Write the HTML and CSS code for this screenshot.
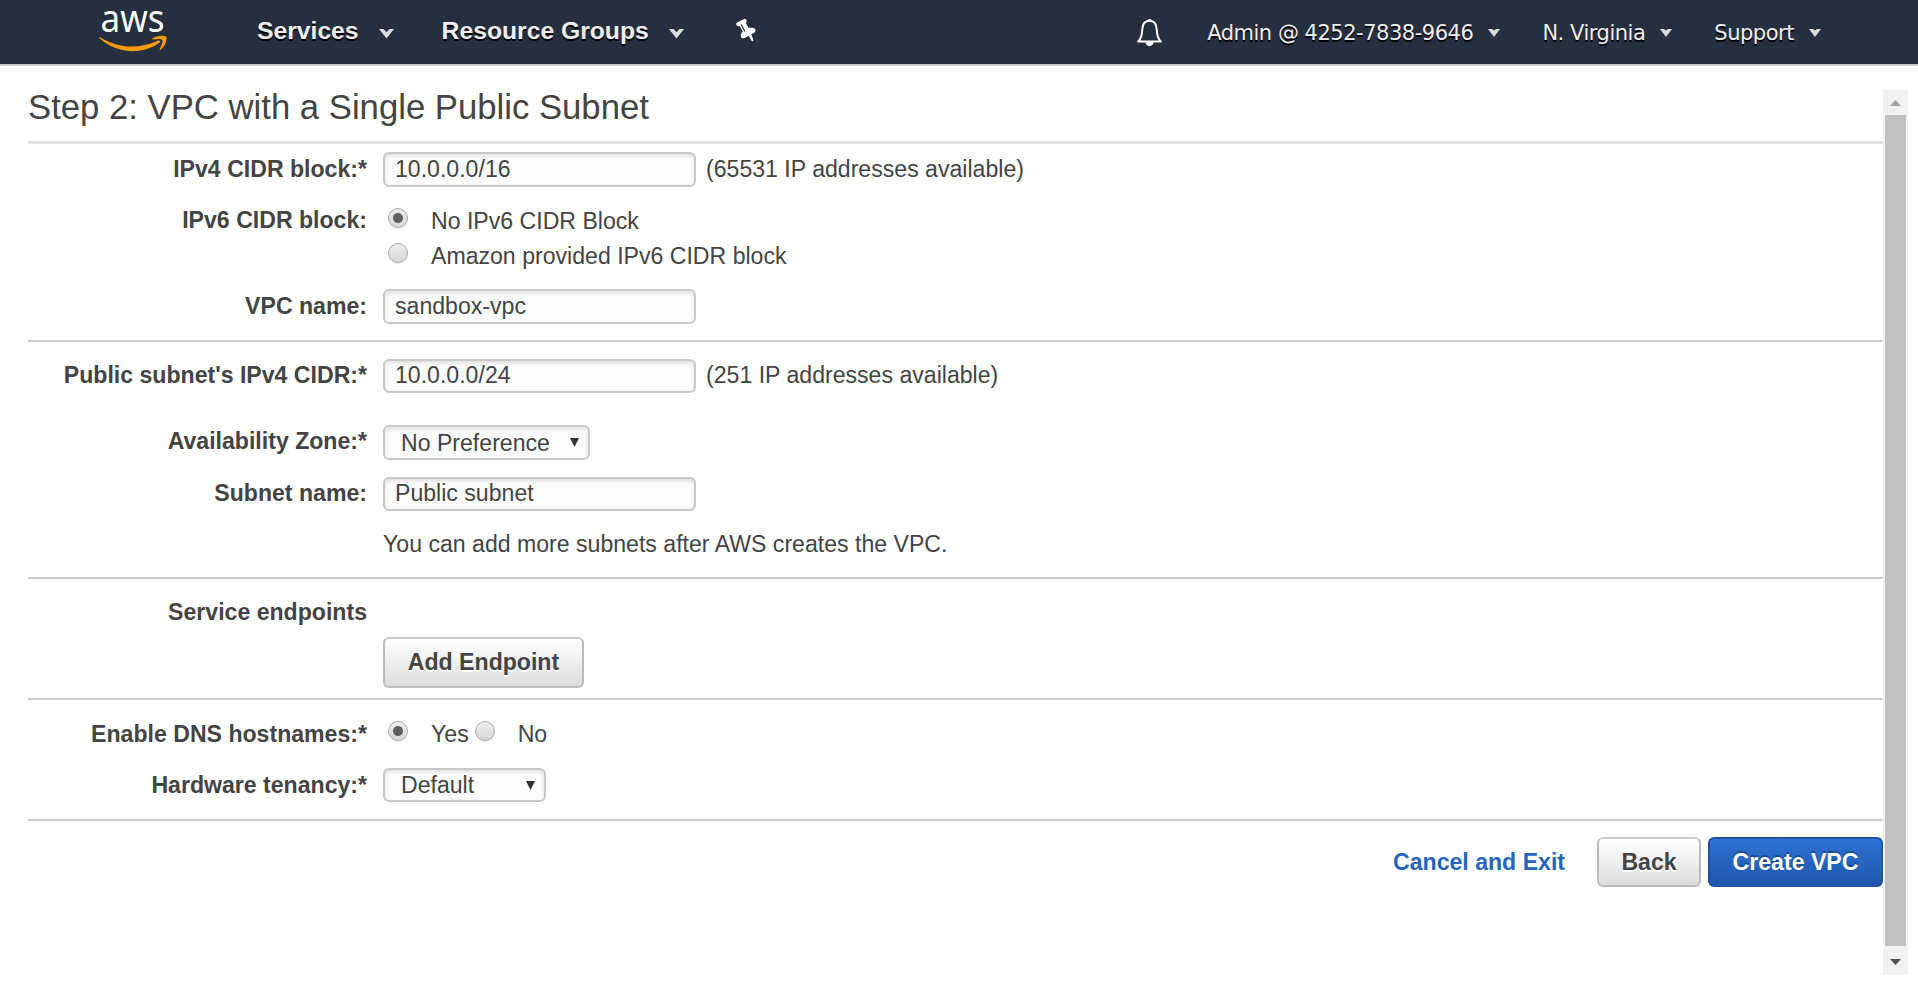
FILE: index.html
```html
<!DOCTYPE html>
<html lang="en">
<head>
<meta charset="utf-8">
<title>Create VPC</title>
<link rel="stylesheet" href="styles.css">
</head>
<body>
<header class="topbar">
  <svg class="logo" width="72" height="48" viewBox="0 0 72 48">
    <text class="logo-word" x="2.5" y="26" textLength="64" lengthAdjust="spacingAndGlyphs">aws</text>
    <path d="M1.5 31C20 42 40 44 60 34.6C62 33.8 63 35.6 61.4 36.8C44 49.500 18 47.500 1.200 32Z" fill="#f79b00"/>
    <path d="M54.500 32.600C59 29 66.500 29.400 68.400 31.100C69 34.600 67 40.500 62.700 43.700C61.800 44.200 61.400 43.700 61.800 42.800C63.400 39.300 65 35.500 64.300 33.900C62.500 32.400 58.500 33.200 55.200 33.600C54.200 33.700 53.800 33.100 54.500 32.600Z" fill="#f79b00"/>
  </svg>
  <nav class="main-nav">
    <a class="menu">Services<svg class="chevron" width="15" height="11" viewBox="0 0 15 11"><path d="M0 1H4.500L7.500 4.200L10.500 1H15L7.500 10.500Z"/></svg></a>
    <a class="menu">Resource Groups<svg class="chevron" width="15" height="11" viewBox="0 0 15 11"><path d="M0 1H4.500L7.500 4.200L10.500 1H15L7.500 10.500Z"/></svg></a>
    <svg class="pin" width="22" height="24" viewBox="0 0 22 24">
      <path d="M.3 5.800C-.2 4.200 1.200 3.300 2 3.100L7.700.3C8.600-.2 10-.1 10.500 1C11.100 2.200 10.400 3.200 9.700 3.700L12.600 9C14.800 8.500 18 8.300 19.200 10.300C20 11.900 19 13.400 17.700 14L15.200 15.300L17.400 21L16.900 22.500L15.500 21.800L12.700 16.700L8.700 18.900C7 19.700 5.200 19.300 4.800 17.500C4.400 15.600 5.600 13.800 6.800 12.600L3.700 6.900C2.300 7.500.8 7.200.3 5.800Z" fill="#fff"/>
      <path d="M5.500 6L8.600 12" stroke="#252f3f" stroke-width="1.200" stroke-linecap="round"/>
    </svg>
  </nav>
  <nav class="account-nav">
    <svg class="bell" width="28" height="30" viewBox="0 0 28 30">
      <path d="M11.300 3.200C11.300-.1 15.700-.1 15.700 3.200Z" fill="#fff"/>
      <path d="M2.200 23.500C4.500 21.300 6 18.500 6.200 12C6.400 6 9 2.800 13.500 2.800S20.600 6 20.800 12C21 18.500 22.500 21.300 24.800 23.500Z" fill="none" stroke="#fff" stroke-width="2" stroke-linejoin="round"/>
      <path d="M9.500 24H17.500C17.500 29.500 9.500 29.500 9.500 24Z" fill="#fff"/>
    </svg>
    <a class="account">Admin @ 4252-7838-9646<svg class="caret" width="12" height="8" viewBox="0 0 12 8"><path d="M0 0H4L6 1.500L8 0H12L6 8Z"/></svg></a>
    <a class="account">N. Virginia<svg class="caret" width="12" height="8" viewBox="0 0 12 8"><path d="M0 0H4L6 1.500L8 0H12L6 8Z"/></svg></a>
    <a class="account">Support<svg class="caret" width="12" height="8" viewBox="0 0 12 8"><path d="M0 0H4L6 1.500L8 0H12L6 8Z"/></svg></a>
  </nav>
</header>
<div class="page">
  <main class="wizard">
    <h1 class="title">Step 2: VPC with a Single Public Subnet</h1>
    <section class="section vpc">
      <div class="row"><span class="label">IPv4 CIDR block:*</span><div class="field"><span class="input">10.0.0.0/16</span><span class="hint">(65531 IP addresses available)</span></div></div>
      <div class="row"><span class="label">IPv6 CIDR block:</span>
        <div class="choices">
          <span class="choice"><i class="radio on"></i>No IPv6 CIDR Block</span>
          <span class="choice"><i class="radio"></i>Amazon provided IPv6 CIDR block</span>
        </div></div>
      <div class="row name-row"><span class="label">VPC name:</span><div class="field"><span class="input">sandbox-vpc</span></div></div>
    </section>
    <section class="section subnet">
      <div class="row zone-gap"><span class="label">Public subnet's IPv4 CIDR:*</span><div class="field"><span class="input short">10.0.0.0/24</span><span class="hint">(251 IP addresses available)</span></div></div>
      <div class="row"><span class="label">Availability Zone:*</span><div class="field"><span class="select zone">No Preference<svg class="arrow" width="9" height="9" viewBox="0 0 10 10"><path d="M0 0H10L5 10Z"/></svg></span></div></div>
      <div class="row"><span class="label">Subnet name:</span><div class="field"><span class="input short">Public subnet</span></div></div>
      <p class="note">You can add more subnets after AWS creates the VPC.</p>
    </section>
    <section class="section endpoints">
      <div class="row"><span class="label">Service endpoints</span></div>
      <a class="button add">Add Endpoint</a>
    </section>
    <section class="section options">
      <div class="row"><span class="label">Enable DNS hostnames:*</span>
        <div class="field"><span class="choice yes"><i class="radio on"></i>Yes</span><span class="choice"><i class="radio"></i>No</span></div></div>
      <div class="row"><span class="label">Hardware tenancy:*</span><div class="field"><span class="select tenancy">Default<svg class="arrow" width="9" height="9" viewBox="0 0 10 10"><path d="M0 0H10L5 10Z"/></svg></span></div></div>
    </section>
    <footer class="actions">
      <a class="cancel">Cancel and Exit</a>
      <a class="button back">Back</a>
      <a class="button primary">Create VPC</a>
    </footer>
  </main>
  <div class="scrollbar">
    <svg class="scroll-up" width="11" height="6" viewBox="0 0 11 6"><path d="M0 6L5.500 0L11 6Z" fill="#a3a3a3"/></svg>
    <div class="thumb"></div>
    <svg class="scroll-down" width="11" height="6" viewBox="0 0 11 6"><path d="M0 0H11L5.500 6Z" fill="#505050"/></svg>
  </div>
</div>
</body>
</html>
```
FILE: styles.css
```css
* { box-sizing: border-box; }
body {
  margin: 0;
  width: 1918px;
  height: 985px;
  overflow: hidden;
  background: #fff;
  color: #444;
  font: 23.1px/35px "Liberation Sans", Arial, sans-serif;
  white-space: nowrap;
}

/* top bar */
.topbar {
  display: flex;
  height: 66px;
  background: #252f3f;
  border-bottom: 2px solid #ccc;
  color: #eee;
}
.logo { margin: 6px 0 0 98px; overflow: visible; }
.logo-word { font: 38px "Noto Sans", sans-serif; fill: #fff; }
.main-nav {
  display: flex;
  margin-left: 87px;
  font-weight: bold;
  font-size: 24.700px;
  line-height: 61px;
  text-shadow: 0 2px 0 #000;
}
.menu { display: flex; margin-right: 48px; }
.chevron { margin: 28px 0 0 20px; fill: #ddd; }
.pin { margin: 19px 0 0 4px; }
.account-nav {
  display: flex;
  margin-left: auto;
  padding-right: 97px;
  font: 21px/66px "DejaVu Sans", sans-serif;
  letter-spacing: -.48px;
  text-shadow: 0 2px 0 #000;
}
.account { display: flex; margin-left: 42px; }
.bell { margin: 18px 0 0; }
.bell + .account { margin-left: 43px; }
.caret { margin: 29px 0 0 15px; fill: #ddd; }

/* page */
.page { display: flex; height: 919px; }
.wizard { width: 1855px; margin-left: 28px; }
.title {
  height: 78px;
  margin: 0;
  border-bottom: 3px solid #e3e3e3;
  font-size: 34.700px;
  font-weight: normal;
  line-height: 83px;
}
.section { border-bottom: 2px solid #ccc; }
.row { display: grid; grid-template-columns: 339px 1fr; column-gap: 16px; }
.label { text-align: right; font-weight: bold; }
.field { display: flex; }
.vpc { height: 198px; padding-top: 8px; display: flex; flex-direction: column; gap: 16px; }
.name-row { margin-top: -1px; }
.subnet { height: 237px; padding-top: 17px; line-height: 33px; }
.subnet .row { height: 52px; }
.subnet .zone-gap { height: 66px; }
.endpoints { height: 121px; padding-top: 16px; }
.options { height: 121px; padding-top: 17px; }
.options .row { height: 51px; }

.input, .select {
  height: 35px;
  border: 2px solid #c9c9c9;
  border-radius: 6px;
  background: #fcfcfc;
  box-shadow: inset 0 2px 4px rgba(0, 0, 0, .12);
  line-height: 31px;
}
.input { width: 313px; padding-left: 10px; }
.short, .tenancy { height: 34px; }
.short { line-height: 29px; }
.hint { margin-left: 10px; }
.select { display: flex; justify-content: space-between; padding: 0 9px 0 16px; }
.zone { width: 207px; line-height: 32px; }
.tenancy { width: 163px; }
.arrow { margin-top: 11px; fill: #333; }
.note { margin: -1px 0 0 355px; }

.choices { display: flex; flex-direction: column; padding-top: 1px; }
.choice { display: flex; padding-left: 5px; }
.yes { margin-right: 1px; }
.radio {
  width: 20px;
  height: 20px;
  margin: 4px 23px 0 0;
  border: 1px solid #aaa;
  border-radius: 50%;
  background: linear-gradient(#eee, #d8d8d8);
  box-shadow: 0 1px 1px rgba(0, 0, 0, .08);
}
.radio.on { background: radial-gradient(circle at 50% 50%, #606060 4.500px, transparent 5.500px), linear-gradient(#eee, #d8d8d8); }

.button {
  display: block;
  border: 2px solid #bbb;
  border-top-color: #ccc;
  border-radius: 6px;
  background: linear-gradient(#fff, #ddd);
  font-weight: bold;
  line-height: 46px;
  text-align: center;
  text-shadow: 0 2px 0 #fff;
}
.add { width: 201px; height: 51px; margin: 7px 0 0 355px; }
.actions { display: flex; justify-content: flex-end; margin-top: 16px; font-weight: bold; }
.cancel { margin-right: 32px; color: #2565c1; line-height: 50px; }
.back { width: 104px; height: 50px; margin-right: 7px; }
.primary {
  width: 175px;
  height: 50px;
  border-color: #1b55ab;
  background: linear-gradient(#2e73d5, #1f55ab);
  color: #fff;
  text-shadow: 0 -2px 0 #1b4b96;
}

/* scrollbar */
.scrollbar {
  display: flex;
  flex-direction: column;
  align-items: center;
  width: 25px;
  height: 885px;
  margin-top: 24px;
  background: #f1f1f1;
}
.scroll-up { margin: 10px 0 9px; }
.thumb { width: 21px; height: 831px; background: #c1c1c1; }
.scroll-down { margin-top: 13px; }
```
